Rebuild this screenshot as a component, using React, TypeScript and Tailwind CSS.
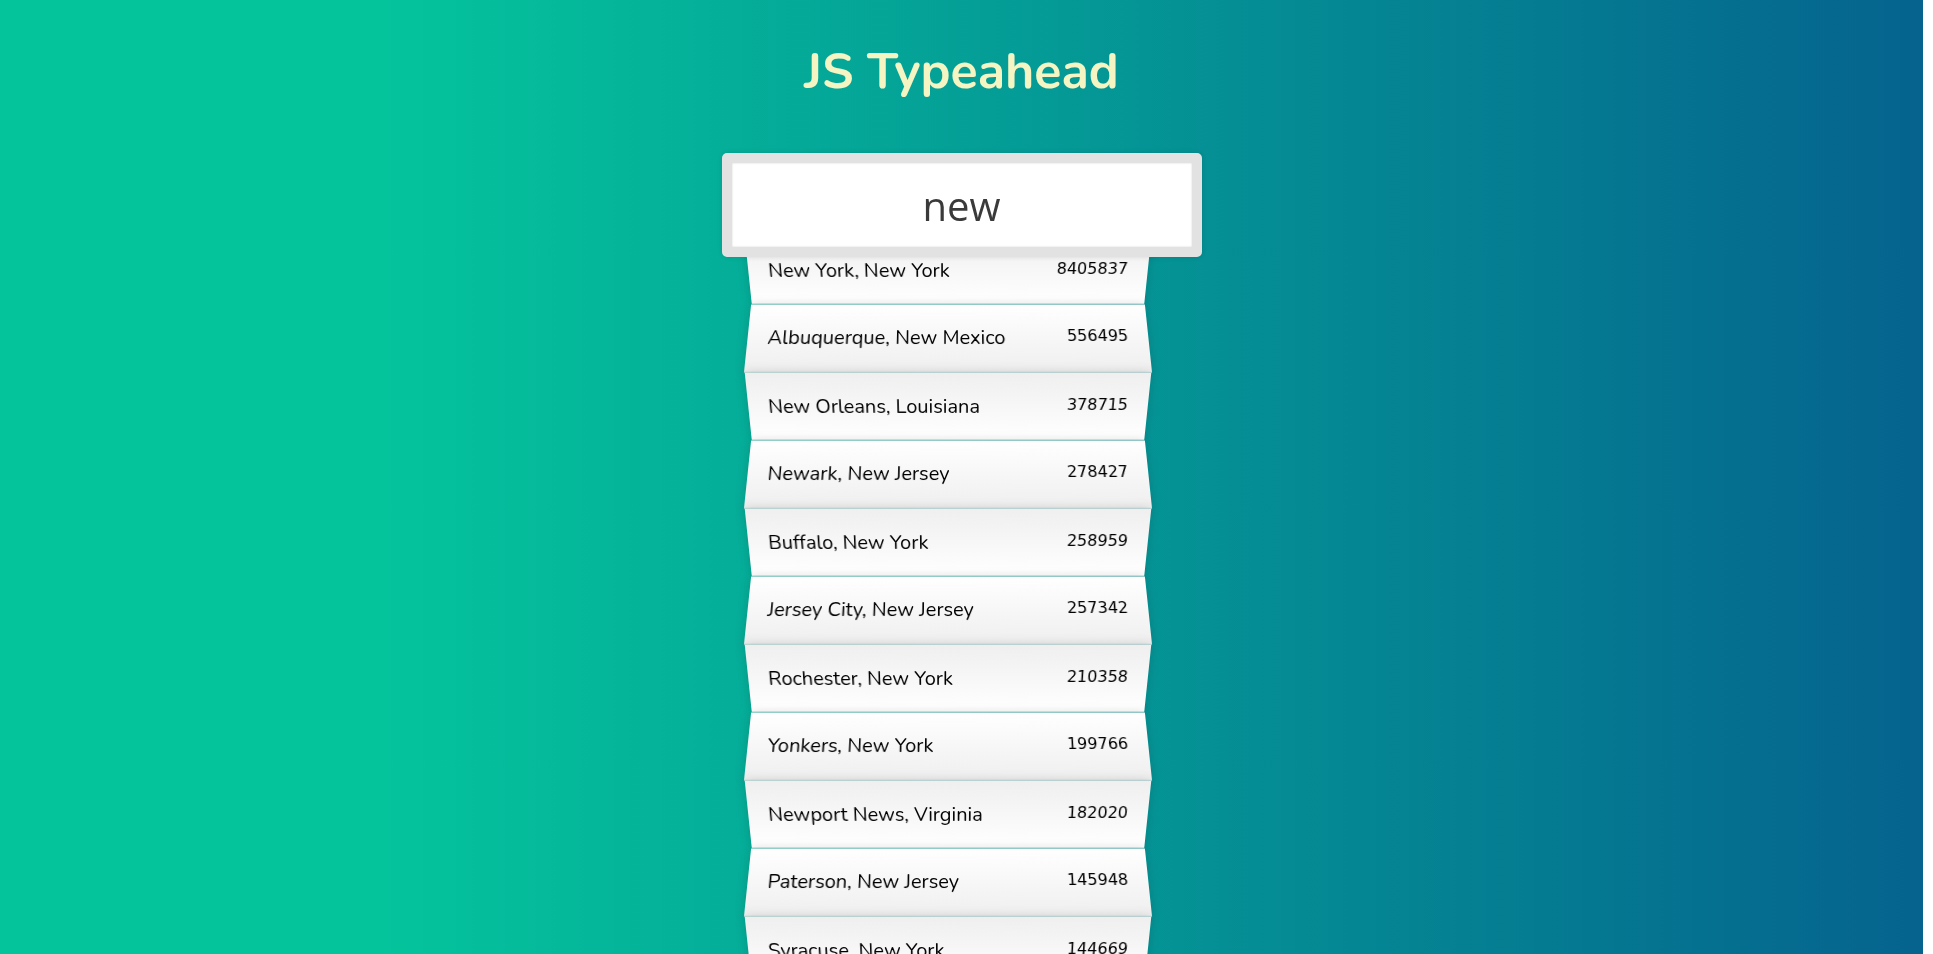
import React from "react";

const cities: [string, string][] = [
  ["New York, New York", "8405837"],
  ["Albuquerque, New Mexico", "556495"],
  ["New Orleans, Louisiana", "378715"],
  ["Newark, New Jersey", "278427"],
  ["Buffalo, New York", "258959"],
  ["Jersey City, New Jersey", "257342"],
  ["Rochester, New York", "210358"],
  ["Yonkers, New York", "199766"],
  ["Newport News, Virginia", "182020"],
  ["Paterson, New Jersey", "145948"],
  ["Syracuse, New York", "144669"],
  ["New Haven, Connecticut", "130660"],
];

export default function App() {
  return (
    <div className="flex h-[954px] w-full overflow-hidden">
      <div className="flex flex-1 flex-col items-center bg-[linear-gradient(to_right,#04c49c_20%,#05638e)]">
        <h1 className="mt-[47px] text-[50px] font-bold leading-[50px] text-[#f4f5c2] [font-family:Nunito,Lato,sans-serif]">
          JS Typeahead
        </h1>
        <form className="mt-[56px] w-[480px]">
          <input
            readOnly
            value="new"
            className="relative z-10 box-border block h-[104px] w-[480px] rounded-[5px] border-[10px] border-[#e2e2e2] bg-white text-center text-[40px] text-[#3a3a3a] shadow-[0_0_5px_rgba(0,0,0,0.12),inset_0_0_2px_rgba(0,0,0,0.19)] outline-none [font-family:'Open_Sans',sans-serif]"
          />
          <ul className="-mt-[23px] ml-[26px] w-[400px] [font-family:Nunito,Lato,sans-serif]">
            {cities.map(([name, pop], i) => (
              <li
                key={name}
                className={
                  i % 2 === 0
                    ? "flex justify-between border-b border-[#d8d8d8] bg-[linear-gradient(to_top,#ffffff_0%,#efefef_100%)] px-5 py-5 text-[20px] leading-[27px] text-black shadow-[0_0_10px_rgba(0,0,0,0.14)] [transform:perspective(100px)_rotateX(-3deg)_translateY(3px)]"
                    : "flex justify-between border-b border-[#d8d8d8] bg-[linear-gradient(to_bottom,#ffffff_0%,#efefef_100%)] px-5 py-5 text-[20px] leading-[27px] text-black shadow-[0_0_10px_rgba(0,0,0,0.14)] [transform:perspective(100px)_rotateX(3deg)_translateY(2px)_scale(1.001)]"
                }
              >
                <span>{name}</span>
                <span className="text-[16px] leading-[24px] [font-family:'DejaVu_Sans',sans-serif]">{pop}</span>
              </li>
            ))}
          </ul>
        </form>
      </div>
      <div className="w-[10px] bg-white" />
    </div>
  );
}
